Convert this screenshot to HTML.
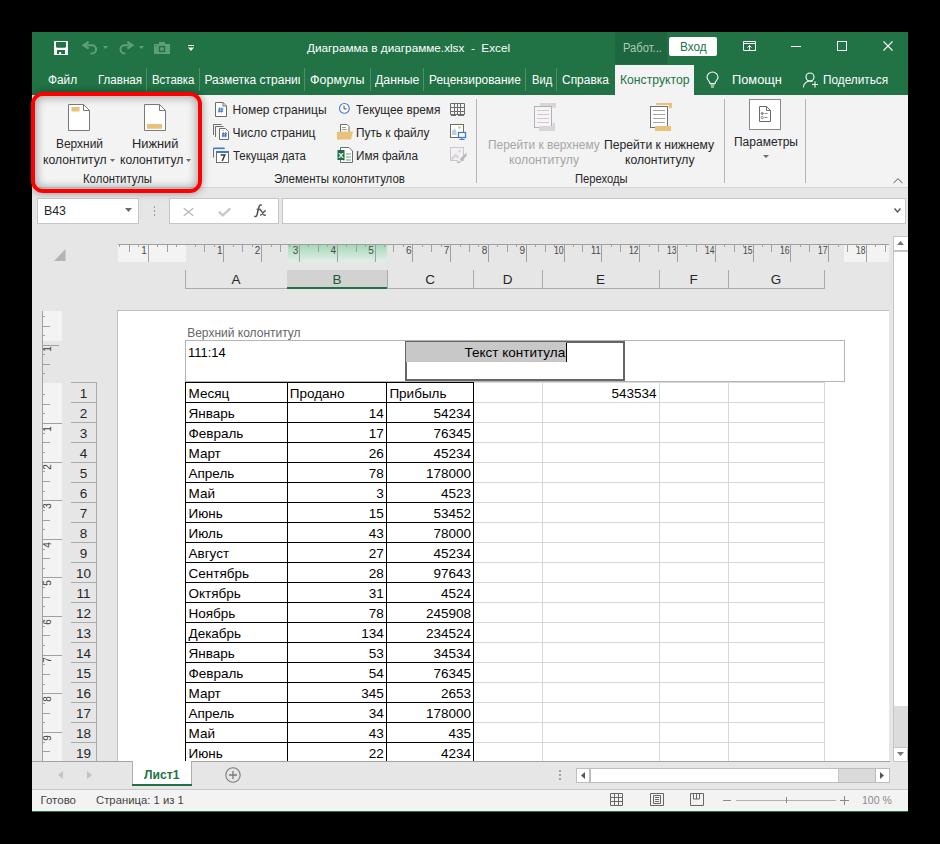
<!DOCTYPE html>
<html><head><meta charset="utf-8">
<style>
*{margin:0;padding:0;box-sizing:border-box}
html,body{width:940px;height:844px;background:#000;overflow:hidden}
body{font-family:"Liberation Sans",sans-serif;position:relative;color:#262626;font-size:12px}
.a{position:absolute;white-space:nowrap;line-height:1}
svg{position:absolute;overflow:visible}
</style></head><body>
<div class="a" style="left:32px;top:32px;width:876px;height:780px;background:#e6e6e6"></div>
<div class="a" style="left:32px;top:32px;width:876px;height:63px;background:#217346"></div>
<svg style="left:54px;top:41px" width="14" height="14" viewBox="0 0 14 14"><rect width="14" height="14" rx="0.6" fill="#fff"/><path d="M2 1h10v5l-1 0.8H3L2 6z" fill="#217346"/><rect x="3" y="9" width="8" height="4" fill="#217346"/><rect x="5.3" y="11" width="1.8" height="2" fill="#fff"/></svg>
<svg style="left:82px;top:41px" width="16" height="14" viewBox="0 0 16 14"><path d="M6.6 0.8L1.6 4.2 6.6 7.6" fill="none" stroke="#5f9e7a" stroke-width="2.2" stroke-linejoin="miter"/><path d="M2.5 4.2H10a4.1 4.1 0 0 1 0 8.2H8.6" fill="none" stroke="#5f9e7a" stroke-width="2"/></svg>
<svg style="left:103px;top:46px" width="5" height="3" viewBox="0 0 5 3"><path d="M0 0h5L2.5 3z" fill="#5f9e7a"/></svg>
<svg style="left:118px;top:41px" width="16" height="14" viewBox="0 0 16 14"><g transform="translate(16,0) scale(-1,1)"><path d="M6.6 0.8L1.6 4.2 6.6 7.6" fill="none" stroke="#5f9e7a" stroke-width="2.2"/><path d="M2.5 4.2H9.5a4.1 4.1 0 0 1 0 8.2H8.6" fill="none" stroke="#5f9e7a" stroke-width="2"/></g></svg>
<svg style="left:139px;top:46px" width="5" height="3" viewBox="0 0 5 3"><path d="M0 0h5L2.5 3z" fill="#5f9e7a"/></svg>
<svg style="left:154px;top:42px" width="16" height="12" viewBox="0 0 16 12"><path d="M0 2h5V0h6v2h5v10H0z" fill="#5f9e7a"/><path d="M4.7 3.9h6.6v6.2H4.7z" fill="#217346"/><path d="M6.2 5.4h3.6v3.2H6.2z" fill="#5f9e7a"/><rect x="1.2" y="3" width="1.2" height="1.2" fill="#217346"/></svg>
<svg style="left:188px;top:45px" width="6" height="7" viewBox="0 0 6 7"><path d="M0 0.5h6" stroke="#fff" stroke-width="1"/><path d="M0 2.5h6L3 6z" fill="#fff"/></svg>
<div class="a" style="left:307px;top:41.95px;font-size:11.75px;color:#fff;">Диаграмма в диаграмме.xlsx&nbsp; -&nbsp; Excel</div>
<div class="a" style="left:615px;top:32px;width:52px;height:32px;background:#1e6640"></div>
<div class="a" style="left:623px;top:41.74px;font-size:12px;color:#a9cbb7;transform:scaleX(0.9320);transform-origin:0 0;">Работ...</div>
<div class="a" style="left:669px;top:37px;width:48px;height:19px;background:#fff;border-radius:2px"></div>
<div class="a" style="left:680px;top:41.32px;font-size:12.5px;color:#217346;transform:scaleX(0.9422);transform-origin:0 0;">Вход</div>
<svg style="left:743px;top:41px" width="13" height="10" viewBox="0 0 13 10"><path d="M0.5 0.5h12v9h-12z M0.5 2.5h12" fill="none" stroke="#fff" stroke-width="1"/><path d="M6.5 9V4.5 M4.5 6.5l2-2 2 2" fill="none" stroke="#fff" stroke-width="1"/></svg>
<div class="a" style="left:791px;top:46px;width:10px;height:1px;background:#fff"></div>
<div class="a" style="left:837px;top:41px;width:10px;height:10px;border:1px solid #fff"></div>
<svg style="left:883px;top:41px" width="10" height="10" viewBox="0 0 10 10"><path d="M0.5 0.5l9 9 M9.5 0.5l-9 9" stroke="#fff" stroke-width="1.1"/></svg>
<div class="a" style="left:47.5px;top:73.54px;font-size:12px;color:#fff;transform:scaleX(0.9880);transform-origin:0 0;">Файл</div>
<div class="a" style="left:97.7px;top:73.54px;font-size:12px;color:#fff;transform:scaleX(0.9639);transform-origin:0 0;">Главная</div>
<div class="a" style="left:152.2px;top:73.54px;font-size:12px;color:#fff;transform:scaleX(0.9509);transform-origin:0 0;">Вставка</div>
<div class="a" style="left:204.4px;top:73.54px;font-size:12px;color:#fff;width:95.5px;overflow:hidden">Разметка страниц</div>
<div class="a" style="left:310.3px;top:73.54px;font-size:12px;color:#fff;transform:scaleX(1.0418);transform-origin:0 0;">Формулы</div>
<div class="a" style="left:374.8px;top:73.54px;font-size:12px;color:#fff;transform:scaleX(1.0237);transform-origin:0 0;">Данные</div>
<div class="a" style="left:429px;top:73.54px;font-size:12px;color:#fff;transform:scaleX(0.9902);transform-origin:0 0;">Рецензирование</div>
<div class="a" style="left:531.7px;top:73.54px;font-size:12px;color:#fff;transform:scaleX(0.9302);transform-origin:0 0;">Вид</div>
<div class="a" style="left:562.4px;top:73.54px;font-size:12px;color:#fff;transform:scaleX(0.9954);transform-origin:0 0;">Справка</div>
<div class="a" style="left:146px;top:68px;width:1px;height:23px;background:#4e8f69"></div>
<div class="a" style="left:199px;top:68px;width:1px;height:23px;background:#4e8f69"></div>
<div class="a" style="left:304px;top:68px;width:1px;height:23px;background:#4e8f69"></div>
<div class="a" style="left:370px;top:68px;width:1px;height:23px;background:#4e8f69"></div>
<div class="a" style="left:423px;top:68px;width:1px;height:23px;background:#4e8f69"></div>
<div class="a" style="left:525px;top:68px;width:1px;height:23px;background:#4e8f69"></div>
<div class="a" style="left:556px;top:68px;width:1px;height:23px;background:#4e8f69"></div>
<div class="a" style="left:615px;top:65px;width:79px;height:30px;background:#f3f3f3"></div>
<div class="a" style="left:619.6px;top:73.54px;font-size:12px;color:#217346;transform:scaleX(1.0154);transform-origin:0 0;">Конструктор</div>
<svg style="left:706px;top:72px" width="13" height="16" viewBox="0 0 13 16"><path d="M4 11.5C4 9 1 8 1 5.5a5.5 5.5 0 0 1 11 0C12 8 9 9 9 11.5z" fill="none" stroke="#fff" stroke-width="1.1"/><path d="M4.5 13h4 M5 15h3" stroke="#fff" stroke-width="1.1"/></svg>
<div class="a" style="left:732.2px;top:73.54px;font-size:12px;color:#fff;transform:scaleX(1.0686);transform-origin:0 0;">Помощн</div>
<svg style="left:803px;top:72px" width="16" height="16" viewBox="0 0 16 16"><circle cx="7" cy="5" r="4" fill="none" stroke="#fff" stroke-width="1.1"/><path d="M0.5 15.5a6.5 6.5 0 0 1 9-6" fill="none" stroke="#fff" stroke-width="1.1"/><path d="M12 9.5v6 M9 12.5h6" stroke="#fff" stroke-width="1.1"/></svg>
<div class="a" style="left:822.6px;top:73.54px;font-size:12px;color:#fff;transform:scaleX(0.9816);transform-origin:0 0;">Поделиться</div>
<div class="a" style="left:32px;top:95px;width:876px;height:92px;background:#f3f3f3"></div>
<div class="a" style="left:32px;top:187px;width:876px;height:1px;background:#d5d5d5"></div>
<svg style="left:67.5px;top:103.5px" width="22" height="27" viewBox="0 0 22 27"><path d="M0.5 0.5h15l6 6v20h-21z" fill="#fff" stroke="#7a7a7a" stroke-width="1"/><path d="M15.5 0.5v6h6" fill="none" stroke="#7a7a7a" stroke-width="1"/><rect x="3.5" y="3" width="8" height="4.5" fill="#e9c27a"/></svg>
<svg style="left:143.5px;top:103.5px" width="22" height="27" viewBox="0 0 22 27"><path d="M0.5 0.5h15l6 6v20h-21z" fill="#fff" stroke="#7a7a7a" stroke-width="1"/><path d="M15.5 0.5v6h6" fill="none" stroke="#7a7a7a" stroke-width="1"/><rect x="3" y="20" width="15" height="4.8" fill="#e9c27a"/></svg>
<div class="a" style="left:55.8px;top:137.64px;font-size:12px;color:#262626;transform:scaleX(0.9937);transform-origin:0 0;">Верхний</div>
<div class="a" style="left:42.9px;top:154.04px;font-size:12px;color:#262626;transform:scaleX(1.0139);transform-origin:0 0;">колонтитул</div>
<svg style="left:109.5px;top:159px" width="5" height="3" viewBox="0 0 5 3"><path d="M0 0h5L2.5 3z" fill="#6b6b6b"/></svg>
<div class="a" style="left:132.4px;top:137.64px;font-size:12px;color:#262626;transform:scaleX(1.0690);transform-origin:0 0;">Нижний</div>
<div class="a" style="left:119.9px;top:154.04px;font-size:12px;color:#262626;transform:scaleX(1.0074);transform-origin:0 0;">колонтитул</div>
<svg style="left:186px;top:159px" width="5" height="3" viewBox="0 0 5 3"><path d="M0 0h5L2.5 3z" fill="#6b6b6b"/></svg>
<div class="a" style="left:82.6px;top:173.04px;font-size:12px;color:#262626;transform:scaleX(0.9435);transform-origin:0 0;">Колонтитулы</div>
<div class="a" style="left:232.6px;top:104.04px;font-size:12px;color:#262626;">Номер страницы</div>
<div class="a" style="left:232.6px;top:126.84px;font-size:12px;color:#262626;">Число страниц</div>
<div class="a" style="left:232.6px;top:149.84px;font-size:12px;color:#262626;transform:scaleX(0.9526);transform-origin:0 0;">Текущая дата</div>
<svg style="left:214.5px;top:101.5px" width="12" height="15" viewBox="0 0 12 15"><path d="M0.5 0.5h7.5l3.5 3.5v10.5h-11z" fill="#fff" stroke="#6d6d6d"/><path d="M8 0.5v3.5h3.5" fill="none" stroke="#6d6d6d"/><path d="M4.6 5.5l-0.6 5 M7.1 5.5l-0.6 5 M3.3 7h5.2 M3 9.1h5.2" stroke="#3e7bc4" stroke-width="1.15"/></svg>
<svg style="left:212.5px;top:124px" width="17" height="16" viewBox="0 0 17 16"><path d="M0.5 11V0.5h8 M2.5 13V2.5h8" fill="none" stroke="#6d6d6d"/><path d="M6.5 4.5h6l3 3v8h-9z" fill="#fff" stroke="#6d6d6d"/><path d="M10.4 8.3l-0.5 5 M12.8 8.3l-0.5 5 M9 9.8h5 M8.8 11.9h5" stroke="#3e7bc4" stroke-width="1.15"/><path d="M9 6.5h2" stroke="#bbb" stroke-width="0.8"/></svg>
<svg style="left:212.5px;top:147px" width="16" height="16" viewBox="0 0 16 16"><path d="M0.5 10.5V1.5h11" fill="none" stroke="#6d6d6d"/><rect x="0.5" y="0.5" width="11" height="1.6" fill="#3e7bc4"/><rect x="3.5" y="4.5" width="12" height="11" fill="#fff" stroke="#6d6d6d"/><rect x="3.5" y="4" width="12" height="2" fill="#3e7bc4"/><path d="M7.6 8h4.2l-2.6 6" fill="none" stroke="#3a3a3a" stroke-width="1.5"/></svg>
<div class="a" style="left:356.4px;top:104.04px;font-size:12px;color:#262626;transform:scaleX(0.9853);transform-origin:0 0;">Текущее время</div>
<div class="a" style="left:356.4px;top:126.84px;font-size:12px;color:#262626;transform:scaleX(0.9839);transform-origin:0 0;">Путь к файлу</div>
<div class="a" style="left:356.4px;top:149.84px;font-size:12px;color:#262626;transform:scaleX(0.9733);transform-origin:0 0;">Имя файла</div>
<svg style="left:339px;top:103px" width="11" height="11" viewBox="0 0 11 11"><circle cx="5.4" cy="5.4" r="4.85" fill="#fff" stroke="#3e7bc4" stroke-width="1.1"/><path d="M5 2.6v3.3h2.5" fill="none" stroke="#444" stroke-width="1"/></svg>
<svg style="left:336.5px;top:124px" width="17" height="16" viewBox="0 0 17 16"><path d="M3.5 8V0.5h6.5l2 2V8" fill="#fff" stroke="#6d6d6d"/><path d="M5 3.5h4 M5 5.5h5" stroke="#9a9a9a"/><path d="M1 7.5h15l-2 8H0z" fill="#e9c27a"/><path d="M0 8h3v7.5H0z" fill="#e9c27a"/></svg>
<svg style="left:336.5px;top:147px" width="17" height="16" viewBox="0 0 17 16"><path d="M3.5 0.5h8.5l3.5 3.5v11.5h-12z" fill="#fff" stroke="#6d6d6d"/><path d="M9 7h5 M9 10h5 M9 13h5 M6 7h1.5 M6 10h1.5 M6 13h1.5" stroke="#5aa36f" stroke-width="1.2"/><rect x="0.5" y="3" width="7" height="10" fill="#1d7044"/><text x="4" y="11" font-size="8" font-weight="bold" fill="#fff" text-anchor="middle" font-family="Liberation Sans">X</text></svg>
<svg style="left:450px;top:103px" width="15" height="13" viewBox="0 0 15 13"><path d="M0.5 0.5h14v11h-14z M0.5 4.5h14 M0.5 8.5h14 M4.5 0.5v11 M7.5 0.5v11 M10.5 0.5v11" fill="none" stroke="#6d6d6d" stroke-width="1"/><path d="M1 12.5h5 M8 12.5h6" stroke="#6d6d6d" stroke-width="1"/></svg>
<svg style="left:450px;top:124px" width="17" height="16" viewBox="0 0 17 16"><rect x="0.5" y="0.5" width="13" height="13" fill="#fff" stroke="#6d6d6d"/><circle cx="9.5" cy="3.5" r="1.3" fill="#e9c27a"/><path d="M2 11V7l2.5-2.5L6.5 7v4z" fill="#b9cfe5"/><rect x="8.5" y="8.5" width="7" height="5" fill="#fff" stroke="#3e7bc4" stroke-width="1.3"/><path d="M12 14v1 M9.5 15.5h5" stroke="#3e7bc4" stroke-width="1.1"/></svg>
<svg style="left:450px;top:147px" width="17" height="16" viewBox="0 0 17 16"><rect x="0.5" y="0.5" width="13" height="13" fill="#f4f0f4" stroke="#c8c8c8"/><path d="M1.5 12.5l4-4.5 3 3" fill="none" stroke="#d6d2d6" stroke-width="2.2"/><circle cx="9.5" cy="4" r="1.5" fill="#dcd8dc"/><path d="M16.5 5.5L10 12l-1.5 1.5-2 2.5h3l2-2L16.5 9z" fill="#b8b8b8"/><circle cx="9.3" cy="13.2" r="1.3" fill="#f4f0f4"/></svg>
<div class="a" style="left:273.9px;top:172.74px;font-size:12px;color:#262626;transform:scaleX(0.9564);transform-origin:0 0;">Элементы колонтитулов</div>
<div class="a" style="left:476px;top:99px;width:1px;height:84px;background:#b4b4b4"></div>
<svg style="left:533px;top:102px" width="24" height="29" viewBox="0 0 24 29"><rect x="7" y="1" width="16" height="4.7" fill="#d9d5d9"/><rect x="1.5" y="4.5" width="17" height="21" fill="#f7f3f7" stroke="#b3b1b3"/><path d="M4 8.5h12 M4 12.5h12 M4 16.5h12 M4 20.5h12" stroke="#cfcccf"/><rect x="6" y="24" width="16" height="5" fill="#d9d5d9"/><rect x="19.5" y="21" width="2.5" height="4" fill="#d9d5d9"/></svg>
<svg style="left:649px;top:102px" width="24" height="29" viewBox="0 0 24 29"><rect x="7" y="1" width="16" height="2" fill="#e9c27a"/><rect x="20" y="1" width="3" height="5" fill="#e9c27a"/><rect x="1.5" y="4.5" width="17" height="21" fill="#fff" stroke="#707070"/><path d="M4 8.5h12 M4 12.5h12 M4 16.5h12 M4 20.5h12" stroke="#a5a5a5"/><rect x="6" y="24" width="16" height="5" fill="#e9c27a"/></svg>
<div class="a" style="left:487.7px;top:138.94px;font-size:12px;color:#a6a6a6;transform:scaleX(0.9924);transform-origin:0 0;">Перейти к верхнему</div>
<div class="a" style="left:508.5px;top:154.04px;font-size:12px;color:#a6a6a6;transform:scaleX(1.0186);transform-origin:0 0;">колонтитулу</div>
<div class="a" style="left:604.4px;top:138.94px;font-size:12px;color:#262626;transform:scaleX(1.0144);transform-origin:0 0;">Перейти к нижнему</div>
<div class="a" style="left:624.7px;top:154.04px;font-size:12px;color:#262626;transform:scaleX(1.0097);transform-origin:0 0;">колонтитулу</div>
<div class="a" style="left:574.6px;top:172.64px;font-size:12px;color:#262626;transform:scaleX(0.9327);transform-origin:0 0;">Переходы</div>
<div class="a" style="left:724px;top:99px;width:1px;height:84px;background:#b4b4b4"></div>
<div class="a" style="left:749px;top:99px;width:32px;height:31px;background:#fff;border:1px solid #8a8a8a"></div>
<svg style="left:759px;top:106px" width="12" height="16" viewBox="0 0 12 16"><path d="M0.5 0.5h7l4 4v11h-11z M7.5 0.5v4h4" fill="#fff" stroke="#6a6a6a" stroke-width="1"/><circle cx="3.3" cy="7.5" r="1.1" fill="#8a8a8a" stroke="#6a6a6a" stroke-width="0.6"/><circle cx="3.3" cy="11.5" r="1.1" fill="#fff" stroke="#6a6a6a" stroke-width="0.8"/><path d="M5.5 7.5h3 M5.5 11.5h3" stroke="#8a8a8a"/></svg>
<div class="a" style="left:733.5px;top:136.34px;font-size:12px;color:#262626;transform:scaleX(0.9999);transform-origin:0 0;">Параметры</div>
<svg style="left:762.5px;top:155px" width="6" height="3" viewBox="0 0 6 3"><path d="M0 0h6L3 3z" fill="#6b6b6b"/></svg>
<div class="a" style="left:805px;top:99px;width:1px;height:84px;background:#b4b4b4"></div>
<svg style="left:892.5px;top:178px" width="10" height="5" viewBox="0 0 10 5"><path d="M0.5 5L5 0.7 9.5 5" fill="none" stroke="#555" stroke-width="1"/></svg>
<div class="a" style="left:31px;top:92.2px;width:171.4px;height:101.3px;border:4.6px solid #ff0000;border-radius:12px;box-shadow:inset 0 0 8px 2px rgba(0,0,0,0.3), 0 0 7px 1px rgba(0,0,0,0.3)"></div>
<div class="a" style="left:37px;top:198px;width:102px;height:26px;background:#fff;border:1px solid #c6c6c6"></div>
<div class="a" style="left:44.2px;top:205.22px;font-size:12.5px;color:#262626;transform:scaleX(0.9886);transform-origin:0 0;">B43</div>
<svg style="left:125px;top:208px" width="7" height="4" viewBox="0 0 7 4"><path d="M0 0h7L3.5 4z" fill="#6b6b6b"/></svg>
<div class="a" style="left:153.5px;top:206px;width:1.5px;height:1.5px;background:#9a9a9a"></div>
<div class="a" style="left:153.5px;top:210px;width:1.5px;height:1.5px;background:#9a9a9a"></div>
<div class="a" style="left:153.5px;top:214px;width:1.5px;height:1.5px;background:#9a9a9a"></div>
<div class="a" style="left:169px;top:198px;width:110px;height:26px;background:#fff;border:1px solid #c6c6c6"></div>
<svg style="left:182.5px;top:208px" width="11" height="8" viewBox="0 0 11 8"><path d="M0.8 0.3l9.4 7.4 M10.2 0.3L0.8 7.7" stroke="#b5b5b5" stroke-width="1.2"/></svg>
<svg style="left:218px;top:208px" width="13" height="8" viewBox="0 0 13 8"><path d="M0.8 3.6l3.9 3.8L12.3 0.4" fill="none" stroke="#c8c8c8" stroke-width="2.2"/></svg>
<svg style="left:253px;top:204px" width="14" height="14" viewBox="0 0 14 14"><path d="M8.8 1.2Q6.8 0.3 6 2.8L4 10.8Q3.4 13 1.2 12.4" fill="none" stroke="#555" stroke-width="1.5"/><path d="M3.6 5.3h4.3" stroke="#555" stroke-width="1.2"/><path d="M6.8 6.4Q8 5.9 9 7.8L10.4 10.3Q11.3 11.9 12.9 11 M12.6 6.3L7.3 11.5" fill="none" stroke="#555" stroke-width="1.4"/></svg>
<div class="a" style="left:282px;top:198px;width:624px;height:26px;background:#fff;border:1px solid #c6c6c6"></div>
<svg style="left:894px;top:208px" width="7" height="5" viewBox="0 0 7 5"><path d="M0.5 0.5L3.5 4 6.5 0.5" fill="none" stroke="#555" stroke-width="1.4"/></svg>
<svg style="left:53.5px;top:249px" width="11.5" height="12" viewBox="0 0 11.5 12"><path d="M11.5 0v12H0z" fill="#b4b4b4"/></svg>
<div class="a" style="left:118px;top:244px;width:771px;height:1px;background:#a0a0a0"></div>
<div class="a" style="left:118px;top:245px;width:68px;height:17px;background:#f3f3f3"></div>
<div class="a" style="left:844px;top:245px;width:45px;height:17px;background:#f3f3f3"></div>
<div class="a" style="left:288px;top:245px;width:99px;height:17px;background:linear-gradient(#a6d9b8,#e3efe7)"></div>
<div class="a" style="left:119.4px;top:245px;width:1px;height:2px;background:#a0a0a0"></div>
<div class="a" style="left:128.8px;top:245px;width:1px;height:7px;background:#a0a0a0"></div>
<div class="a" style="left:138.3px;top:245px;width:1px;height:2px;background:#a0a0a0"></div>
<div class="a" style="left:147.7px;top:245px;width:1px;height:17px;background:#a0a0a0"></div>
<div class="a" style="left:157.2px;top:245px;width:1px;height:2px;background:#a0a0a0"></div>
<div class="a" style="left:166.6px;top:245px;width:1px;height:7px;background:#a0a0a0"></div>
<div class="a" style="left:176.1px;top:245px;width:1px;height:2px;background:#a0a0a0"></div>
<div class="a" style="left:194.9px;top:245px;width:1px;height:2px;background:#a0a0a0"></div>
<div class="a" style="left:204.4px;top:245px;width:1px;height:7px;background:#a0a0a0"></div>
<div class="a" style="left:213.8px;top:245px;width:1px;height:2px;background:#a0a0a0"></div>
<div class="a" style="left:223.3px;top:245px;width:1px;height:17px;background:#a0a0a0"></div>
<div class="a" style="left:232.7px;top:245px;width:1px;height:2px;background:#a0a0a0"></div>
<div class="a" style="left:242.2px;top:245px;width:1px;height:7px;background:#a0a0a0"></div>
<div class="a" style="left:251.6px;top:245px;width:1px;height:2px;background:#a0a0a0"></div>
<div class="a" style="left:261.1px;top:245px;width:1px;height:17px;background:#a0a0a0"></div>
<div class="a" style="left:270.6px;top:245px;width:1px;height:2px;background:#a0a0a0"></div>
<div class="a" style="left:280.0px;top:245px;width:1px;height:7px;background:#a0a0a0"></div>
<div class="a" style="left:289.4px;top:245px;width:1px;height:2px;background:#a0a0a0"></div>
<div class="a" style="left:298.9px;top:245px;width:1px;height:17px;background:#a0a0a0"></div>
<div class="a" style="left:308.4px;top:245px;width:1px;height:2px;background:#a0a0a0"></div>
<div class="a" style="left:317.8px;top:245px;width:1px;height:7px;background:#a0a0a0"></div>
<div class="a" style="left:327.3px;top:245px;width:1px;height:2px;background:#a0a0a0"></div>
<div class="a" style="left:336.7px;top:245px;width:1px;height:17px;background:#a0a0a0"></div>
<div class="a" style="left:346.1px;top:245px;width:1px;height:2px;background:#a0a0a0"></div>
<div class="a" style="left:355.6px;top:245px;width:1px;height:7px;background:#a0a0a0"></div>
<div class="a" style="left:365.0px;top:245px;width:1px;height:2px;background:#a0a0a0"></div>
<div class="a" style="left:374.5px;top:245px;width:1px;height:17px;background:#a0a0a0"></div>
<div class="a" style="left:383.9px;top:245px;width:1px;height:2px;background:#a0a0a0"></div>
<div class="a" style="left:393.4px;top:245px;width:1px;height:7px;background:#a0a0a0"></div>
<div class="a" style="left:402.9px;top:245px;width:1px;height:2px;background:#a0a0a0"></div>
<div class="a" style="left:412.3px;top:245px;width:1px;height:17px;background:#a0a0a0"></div>
<div class="a" style="left:421.7px;top:245px;width:1px;height:2px;background:#a0a0a0"></div>
<div class="a" style="left:431.2px;top:245px;width:1px;height:7px;background:#a0a0a0"></div>
<div class="a" style="left:440.6px;top:245px;width:1px;height:2px;background:#a0a0a0"></div>
<div class="a" style="left:450.1px;top:245px;width:1px;height:17px;background:#a0a0a0"></div>
<div class="a" style="left:459.5px;top:245px;width:1px;height:2px;background:#a0a0a0"></div>
<div class="a" style="left:469.0px;top:245px;width:1px;height:7px;background:#a0a0a0"></div>
<div class="a" style="left:478.4px;top:245px;width:1px;height:2px;background:#a0a0a0"></div>
<div class="a" style="left:487.9px;top:245px;width:1px;height:17px;background:#a0a0a0"></div>
<div class="a" style="left:497.3px;top:245px;width:1px;height:2px;background:#a0a0a0"></div>
<div class="a" style="left:506.8px;top:245px;width:1px;height:7px;background:#a0a0a0"></div>
<div class="a" style="left:516.3px;top:245px;width:1px;height:2px;background:#a0a0a0"></div>
<div class="a" style="left:525.7px;top:245px;width:1px;height:17px;background:#a0a0a0"></div>
<div class="a" style="left:535.1px;top:245px;width:1px;height:2px;background:#a0a0a0"></div>
<div class="a" style="left:544.6px;top:245px;width:1px;height:7px;background:#a0a0a0"></div>
<div class="a" style="left:554.0px;top:245px;width:1px;height:2px;background:#a0a0a0"></div>
<div class="a" style="left:563.5px;top:245px;width:1px;height:17px;background:#a0a0a0"></div>
<div class="a" style="left:573.0px;top:245px;width:1px;height:2px;background:#a0a0a0"></div>
<div class="a" style="left:582.4px;top:245px;width:1px;height:7px;background:#a0a0a0"></div>
<div class="a" style="left:591.8px;top:245px;width:1px;height:2px;background:#a0a0a0"></div>
<div class="a" style="left:601.3px;top:245px;width:1px;height:17px;background:#a0a0a0"></div>
<div class="a" style="left:610.7px;top:245px;width:1px;height:2px;background:#a0a0a0"></div>
<div class="a" style="left:620.2px;top:245px;width:1px;height:7px;background:#a0a0a0"></div>
<div class="a" style="left:629.6px;top:245px;width:1px;height:2px;background:#a0a0a0"></div>
<div class="a" style="left:639.1px;top:245px;width:1px;height:17px;background:#a0a0a0"></div>
<div class="a" style="left:648.5px;top:245px;width:1px;height:2px;background:#a0a0a0"></div>
<div class="a" style="left:658.0px;top:245px;width:1px;height:7px;background:#a0a0a0"></div>
<div class="a" style="left:667.5px;top:245px;width:1px;height:2px;background:#a0a0a0"></div>
<div class="a" style="left:676.9px;top:245px;width:1px;height:17px;background:#a0a0a0"></div>
<div class="a" style="left:686.3px;top:245px;width:1px;height:2px;background:#a0a0a0"></div>
<div class="a" style="left:695.8px;top:245px;width:1px;height:7px;background:#a0a0a0"></div>
<div class="a" style="left:705.3px;top:245px;width:1px;height:2px;background:#a0a0a0"></div>
<div class="a" style="left:714.7px;top:245px;width:1px;height:17px;background:#a0a0a0"></div>
<div class="a" style="left:724.1px;top:245px;width:1px;height:2px;background:#a0a0a0"></div>
<div class="a" style="left:733.6px;top:245px;width:1px;height:7px;background:#a0a0a0"></div>
<div class="a" style="left:743.0px;top:245px;width:1px;height:2px;background:#a0a0a0"></div>
<div class="a" style="left:752.5px;top:245px;width:1px;height:17px;background:#a0a0a0"></div>
<div class="a" style="left:761.9px;top:245px;width:1px;height:2px;background:#a0a0a0"></div>
<div class="a" style="left:771.4px;top:245px;width:1px;height:7px;background:#a0a0a0"></div>
<div class="a" style="left:780.8px;top:245px;width:1px;height:2px;background:#a0a0a0"></div>
<div class="a" style="left:790.3px;top:245px;width:1px;height:17px;background:#a0a0a0"></div>
<div class="a" style="left:799.7px;top:245px;width:1px;height:2px;background:#a0a0a0"></div>
<div class="a" style="left:809.2px;top:245px;width:1px;height:7px;background:#a0a0a0"></div>
<div class="a" style="left:818.6px;top:245px;width:1px;height:2px;background:#a0a0a0"></div>
<div class="a" style="left:828.1px;top:245px;width:1px;height:17px;background:#a0a0a0"></div>
<div class="a" style="left:837.5px;top:245px;width:1px;height:2px;background:#a0a0a0"></div>
<div class="a" style="left:847.0px;top:245px;width:1px;height:7px;background:#a0a0a0"></div>
<div class="a" style="left:856.4px;top:245px;width:1px;height:2px;background:#a0a0a0"></div>
<div class="a" style="left:865.9px;top:245px;width:1px;height:17px;background:#a0a0a0"></div>
<div class="a" style="left:875.3px;top:245px;width:1px;height:2px;background:#a0a0a0"></div>
<div class="a" style="left:884.8px;top:245px;width:1px;height:7px;background:#a0a0a0"></div>
<div class="a" style="left:-77.39999999999998px;width:300px;text-align:right;top:245.73px;font-size:10px;color:#4a4a4a;">1</div>
<div class="a" style="left:-39.599999999999966px;width:300px;text-align:right;top:245.73px;font-size:10px;color:#4a4a4a;">2</div>
<div class="a" style="left:-1.8000000000000114px;width:300px;text-align:right;top:245.73px;font-size:10px;color:#4a4a4a;">3</div>
<div class="a" style="left:36.0px;width:300px;text-align:right;top:245.73px;font-size:10px;color:#4a4a4a;">4</div>
<div class="a" style="left:73.80000000000001px;width:300px;text-align:right;top:245.73px;font-size:10px;color:#4a4a4a;">5</div>
<div class="a" style="left:111.59999999999997px;width:300px;text-align:right;top:245.73px;font-size:10px;color:#4a4a4a;">6</div>
<div class="a" style="left:149.39999999999998px;width:300px;text-align:right;top:245.73px;font-size:10px;color:#4a4a4a;">7</div>
<div class="a" style="left:187.2px;width:300px;text-align:right;top:245.73px;font-size:10px;color:#4a4a4a;">8</div>
<div class="a" style="left:225.0px;width:300px;text-align:right;top:245.73px;font-size:10px;color:#4a4a4a;">9</div>
<div class="a" style="left:553.6px;top:245.73px;font-size:10px;color:#4a4a4a;transform:scaleX(0.8621);transform-origin:0 0;">10</div>
<div class="a" style="left:591.4px;top:245.73px;font-size:10px;color:#4a4a4a;transform:scaleX(0.9289);transform-origin:0 0;">11</div>
<div class="a" style="left:629.1999999999999px;top:245.73px;font-size:10px;color:#4a4a4a;transform:scaleX(0.8621);transform-origin:0 0;">12</div>
<div class="a" style="left:667.0px;top:245.73px;font-size:10px;color:#4a4a4a;transform:scaleX(0.8621);transform-origin:0 0;">13</div>
<div class="a" style="left:704.8px;top:245.73px;font-size:10px;color:#4a4a4a;transform:scaleX(0.8621);transform-origin:0 0;">14</div>
<div class="a" style="left:742.6px;top:245.73px;font-size:10px;color:#4a4a4a;transform:scaleX(0.8621);transform-origin:0 0;">15</div>
<div class="a" style="left:780.4px;top:245.73px;font-size:10px;color:#4a4a4a;transform:scaleX(0.8621);transform-origin:0 0;">16</div>
<div class="a" style="left:818.1999999999999px;top:245.73px;font-size:10px;color:#4a4a4a;transform:scaleX(0.8621);transform-origin:0 0;">17</div>
<div class="a" style="left:856.0px;top:245.73px;font-size:10px;color:#4a4a4a;transform:scaleX(0.8621);transform-origin:0 0;">18</div>
<div class="a" style="left:-153.3px;width:300px;text-align:right;top:245.73px;font-size:10px;color:#4a4a4a;">1</div>
<div class="a" style="left:185px;top:288px;width:640px;height:1px;background:#ababab"></div>
<div class="a" style="left:185px;top:270px;width:1px;height:19px;background:#ababab"></div>
<div class="a" style="left:86.0px;width:300px;text-align:center;top:272.57px;font-size:13.5px;color:#262626;">A</div>
<div class="a" style="left:287px;top:270px;width:1px;height:19px;background:#ababab"></div>
<div class="a" style="left:287px;top:270px;width:100px;height:19px;background:#d2d2d2"></div>
<div class="a" style="left:287px;top:287px;width:100px;height:2px;background:#217346"></div>
<div class="a" style="left:187.0px;width:300px;text-align:center;top:272.57px;font-size:13.5px;color:#1d5a37;">B</div>
<div class="a" style="left:387px;top:270px;width:1px;height:19px;background:#ababab"></div>
<div class="a" style="left:280.0px;width:300px;text-align:center;top:272.57px;font-size:13.5px;color:#262626;">C</div>
<div class="a" style="left:473px;top:270px;width:1px;height:19px;background:#ababab"></div>
<div class="a" style="left:357.5px;width:300px;text-align:center;top:272.57px;font-size:13.5px;color:#262626;">D</div>
<div class="a" style="left:542px;top:270px;width:1px;height:19px;background:#ababab"></div>
<div class="a" style="left:450.5px;width:300px;text-align:center;top:272.57px;font-size:13.5px;color:#262626;">E</div>
<div class="a" style="left:659px;top:270px;width:1px;height:19px;background:#ababab"></div>
<div class="a" style="left:543.5px;width:300px;text-align:center;top:272.57px;font-size:13.5px;color:#262626;">F</div>
<div class="a" style="left:728px;top:270px;width:1px;height:19px;background:#ababab"></div>
<div class="a" style="left:626.0px;width:300px;text-align:center;top:272.57px;font-size:13.5px;color:#262626;">G</div>
<div class="a" style="left:824px;top:270px;width:1px;height:19px;background:#ababab"></div>
<div class="a" style="left:42px;top:311px;width:1px;height:450px;background:#a0a0a0"></div>
<div class="a" style="left:43px;top:311px;width:19px;height:30px;background:#f3f3f3"></div>
<div class="a" style="left:43px;top:383px;width:19px;height:378px;background:#f3f3f3"></div>
<div class="a" style="left:43px;top:373.1px;width:1.5px;height:1px;background:#a0a0a0"></div>
<div class="a" style="left:43px;top:363.6px;width:7px;height:1px;background:#a0a0a0"></div>
<div class="a" style="left:43px;top:354.1px;width:1.5px;height:1px;background:#a0a0a0"></div>
<div class="a" style="left:43px;top:344.7px;width:16px;height:1px;background:#a0a0a0"></div>
<div class="a" style="left:43px;top:335.3px;width:1.5px;height:1px;background:#a0a0a0"></div>
<div class="a" style="left:43px;top:325.8px;width:7px;height:1px;background:#a0a0a0"></div>
<div class="a" style="left:43px;top:316.4px;width:1.5px;height:1px;background:#a0a0a0"></div>
<div class="a" style="left:43px;top:394.0px;width:1.5px;height:1px;background:#a0a0a0"></div>
<div class="a" style="left:43px;top:403.7px;width:7px;height:1px;background:#a0a0a0"></div>
<div class="a" style="left:43px;top:413.3px;width:1.5px;height:1px;background:#a0a0a0"></div>
<div class="a" style="left:43px;top:423.0px;width:19px;height:1px;background:#a0a0a0"></div>
<div class="a" style="left:43px;top:432.6px;width:1.5px;height:1px;background:#a0a0a0"></div>
<div class="a" style="left:43px;top:442.3px;width:7px;height:1px;background:#a0a0a0"></div>
<div class="a" style="left:43px;top:451.9px;width:1.5px;height:1px;background:#a0a0a0"></div>
<div class="a" style="left:43px;top:461.6px;width:19px;height:1px;background:#a0a0a0"></div>
<div class="a" style="left:43px;top:471.3px;width:1.5px;height:1px;background:#a0a0a0"></div>
<div class="a" style="left:43px;top:480.9px;width:7px;height:1px;background:#a0a0a0"></div>
<div class="a" style="left:43px;top:490.5px;width:1.5px;height:1px;background:#a0a0a0"></div>
<div class="a" style="left:43px;top:500.2px;width:19px;height:1px;background:#a0a0a0"></div>
<div class="a" style="left:43px;top:509.8px;width:1.5px;height:1px;background:#a0a0a0"></div>
<div class="a" style="left:43px;top:519.5px;width:7px;height:1px;background:#a0a0a0"></div>
<div class="a" style="left:43px;top:529.1px;width:1.5px;height:1px;background:#a0a0a0"></div>
<div class="a" style="left:43px;top:538.8px;width:19px;height:1px;background:#a0a0a0"></div>
<div class="a" style="left:43px;top:548.5px;width:1.5px;height:1px;background:#a0a0a0"></div>
<div class="a" style="left:43px;top:558.1px;width:7px;height:1px;background:#a0a0a0"></div>
<div class="a" style="left:43px;top:567.7px;width:1.5px;height:1px;background:#a0a0a0"></div>
<div class="a" style="left:43px;top:577.4px;width:19px;height:1px;background:#a0a0a0"></div>
<div class="a" style="left:43px;top:587.0px;width:1.5px;height:1px;background:#a0a0a0"></div>
<div class="a" style="left:43px;top:596.7px;width:7px;height:1px;background:#a0a0a0"></div>
<div class="a" style="left:43px;top:606.4px;width:1.5px;height:1px;background:#a0a0a0"></div>
<div class="a" style="left:43px;top:616.0px;width:19px;height:1px;background:#a0a0a0"></div>
<div class="a" style="left:43px;top:625.6px;width:1.5px;height:1px;background:#a0a0a0"></div>
<div class="a" style="left:43px;top:635.3px;width:7px;height:1px;background:#a0a0a0"></div>
<div class="a" style="left:43px;top:645.0px;width:1.5px;height:1px;background:#a0a0a0"></div>
<div class="a" style="left:43px;top:654.6px;width:19px;height:1px;background:#a0a0a0"></div>
<div class="a" style="left:43px;top:664.3px;width:1.5px;height:1px;background:#a0a0a0"></div>
<div class="a" style="left:43px;top:673.9px;width:7px;height:1px;background:#a0a0a0"></div>
<div class="a" style="left:43px;top:683.5px;width:1.5px;height:1px;background:#a0a0a0"></div>
<div class="a" style="left:43px;top:693.2px;width:19px;height:1px;background:#a0a0a0"></div>
<div class="a" style="left:43px;top:702.8px;width:1.5px;height:1px;background:#a0a0a0"></div>
<div class="a" style="left:43px;top:712.5px;width:7px;height:1px;background:#a0a0a0"></div>
<div class="a" style="left:43px;top:722.1px;width:1.5px;height:1px;background:#a0a0a0"></div>
<div class="a" style="left:43px;top:731.8px;width:19px;height:1px;background:#a0a0a0"></div>
<div class="a" style="left:43px;top:741.5px;width:1.5px;height:1px;background:#a0a0a0"></div>
<div class="a" style="left:43px;top:751.1px;width:7px;height:1px;background:#a0a0a0"></div>
<div class="a" style="left:43.5px;top:424.8px;width:8px;height:8px;line-height:8px;font-size:10px;color:#404040;transform:rotate(-90deg);text-align:center">1</div>
<div class="a" style="left:43.5px;top:463.4px;width:8px;height:8px;line-height:8px;font-size:10px;color:#404040;transform:rotate(-90deg);text-align:center">2</div>
<div class="a" style="left:43.5px;top:502.0px;width:8px;height:8px;line-height:8px;font-size:10px;color:#404040;transform:rotate(-90deg);text-align:center">3</div>
<div class="a" style="left:43.5px;top:540.5999999999999px;width:8px;height:8px;line-height:8px;font-size:10px;color:#404040;transform:rotate(-90deg);text-align:center">4</div>
<div class="a" style="left:43.5px;top:579.1999999999999px;width:8px;height:8px;line-height:8px;font-size:10px;color:#404040;transform:rotate(-90deg);text-align:center">5</div>
<div class="a" style="left:43.5px;top:617.8px;width:8px;height:8px;line-height:8px;font-size:10px;color:#404040;transform:rotate(-90deg);text-align:center">6</div>
<div class="a" style="left:43.5px;top:656.3999999999999px;width:8px;height:8px;line-height:8px;font-size:10px;color:#404040;transform:rotate(-90deg);text-align:center">7</div>
<div class="a" style="left:43.5px;top:695.0px;width:8px;height:8px;line-height:8px;font-size:10px;color:#404040;transform:rotate(-90deg);text-align:center">8</div>
<div class="a" style="left:43.5px;top:733.5999999999999px;width:8px;height:8px;line-height:8px;font-size:10px;color:#404040;transform:rotate(-90deg);text-align:center">9</div>
<div class="a" style="left:43.5px;top:345.2px;width:8px;height:8px;line-height:8px;font-size:10px;color:#404040;transform:rotate(-90deg);text-align:center">1</div>
<div class="a" style="left:117px;top:310px;width:772px;height:451px;background:#fff;border-left:1px solid #c0c0c0;border-top:1px solid #c0c0c0"></div>
<div class="a" style="left:187.2px;top:327.04px;font-size:12px;color:#666;">Верхний колонтитул</div>
<div class="a" style="left:185px;top:340px;width:660px;height:42px;border:1px solid #b4b4b4"></div>
<div class="a" style="left:405px;top:341px;width:220px;height:40px;border:2px solid #666;background:#fff"></div>
<div class="a" style="left:406px;top:342px;width:160px;height:20px;background:#c8c8c8"></div>
<div class="a" style="left:187.5px;top:345.77px;font-size:13.5px;color:#000;transform:scaleX(0.9579);transform-origin:0 0;">111:14</div>
<div class="a" style="left:464.5px;top:345.97px;font-size:13.5px;color:#000;">Текст контитула</div>
<div class="a" style="left:565.5px;top:342.5px;width:1px;height:19.5px;background:#000"></div>
<div class="a" style="left:71px;top:382px;width:26px;height:1px;background:#ababab"></div>
<div class="a" style="left:-66.5px;width:300px;text-align:center;top:386.57px;font-size:13.5px;color:#262626;">1</div>
<div class="a" style="left:71px;top:402px;width:26px;height:1px;background:#ababab"></div>
<div class="a" style="left:-66.5px;width:300px;text-align:center;top:406.57px;font-size:13.5px;color:#262626;">2</div>
<div class="a" style="left:71px;top:422px;width:26px;height:1px;background:#ababab"></div>
<div class="a" style="left:-66.5px;width:300px;text-align:center;top:426.57px;font-size:13.5px;color:#262626;">3</div>
<div class="a" style="left:71px;top:442px;width:26px;height:1px;background:#ababab"></div>
<div class="a" style="left:-66.5px;width:300px;text-align:center;top:446.57px;font-size:13.5px;color:#262626;">4</div>
<div class="a" style="left:71px;top:462px;width:26px;height:1px;background:#ababab"></div>
<div class="a" style="left:-66.5px;width:300px;text-align:center;top:466.57px;font-size:13.5px;color:#262626;">5</div>
<div class="a" style="left:71px;top:482px;width:26px;height:1px;background:#ababab"></div>
<div class="a" style="left:-66.5px;width:300px;text-align:center;top:486.57px;font-size:13.5px;color:#262626;">6</div>
<div class="a" style="left:71px;top:502px;width:26px;height:1px;background:#ababab"></div>
<div class="a" style="left:-66.5px;width:300px;text-align:center;top:506.57px;font-size:13.5px;color:#262626;">7</div>
<div class="a" style="left:71px;top:522px;width:26px;height:1px;background:#ababab"></div>
<div class="a" style="left:-66.5px;width:300px;text-align:center;top:526.57px;font-size:13.5px;color:#262626;">8</div>
<div class="a" style="left:71px;top:542px;width:26px;height:1px;background:#ababab"></div>
<div class="a" style="left:-66.5px;width:300px;text-align:center;top:546.57px;font-size:13.5px;color:#262626;">9</div>
<div class="a" style="left:71px;top:562px;width:26px;height:1px;background:#ababab"></div>
<div class="a" style="left:-66.5px;width:300px;text-align:center;top:566.57px;font-size:13.5px;color:#262626;">10</div>
<div class="a" style="left:71px;top:582px;width:26px;height:1px;background:#ababab"></div>
<div class="a" style="left:-66.5px;width:300px;text-align:center;top:586.57px;font-size:13.5px;color:#262626;">11</div>
<div class="a" style="left:71px;top:602px;width:26px;height:1px;background:#ababab"></div>
<div class="a" style="left:-66.5px;width:300px;text-align:center;top:606.57px;font-size:13.5px;color:#262626;">12</div>
<div class="a" style="left:71px;top:622px;width:26px;height:1px;background:#ababab"></div>
<div class="a" style="left:-66.5px;width:300px;text-align:center;top:626.57px;font-size:13.5px;color:#262626;">13</div>
<div class="a" style="left:71px;top:642px;width:26px;height:1px;background:#ababab"></div>
<div class="a" style="left:-66.5px;width:300px;text-align:center;top:646.57px;font-size:13.5px;color:#262626;">14</div>
<div class="a" style="left:71px;top:662px;width:26px;height:1px;background:#ababab"></div>
<div class="a" style="left:-66.5px;width:300px;text-align:center;top:666.57px;font-size:13.5px;color:#262626;">15</div>
<div class="a" style="left:71px;top:682px;width:26px;height:1px;background:#ababab"></div>
<div class="a" style="left:-66.5px;width:300px;text-align:center;top:686.57px;font-size:13.5px;color:#262626;">16</div>
<div class="a" style="left:71px;top:702px;width:26px;height:1px;background:#ababab"></div>
<div class="a" style="left:-66.5px;width:300px;text-align:center;top:706.57px;font-size:13.5px;color:#262626;">17</div>
<div class="a" style="left:71px;top:722px;width:26px;height:1px;background:#ababab"></div>
<div class="a" style="left:-66.5px;width:300px;text-align:center;top:726.57px;font-size:13.5px;color:#262626;">18</div>
<div class="a" style="left:71px;top:742px;width:26px;height:1px;background:#ababab"></div>
<div class="a" style="left:-66.5px;width:300px;text-align:center;top:746.57px;font-size:13.5px;color:#262626;">19</div>
<div class="a" style="left:96px;top:382px;width:1px;height:379px;background:#ababab"></div>
<div class="a" style="left:473px;top:382px;width:352px;height:1px;background:#d9d9d9"></div>
<div class="a" style="left:473px;top:402px;width:352px;height:1px;background:#d9d9d9"></div>
<div class="a" style="left:473px;top:422px;width:352px;height:1px;background:#d9d9d9"></div>
<div class="a" style="left:473px;top:442px;width:352px;height:1px;background:#d9d9d9"></div>
<div class="a" style="left:473px;top:462px;width:352px;height:1px;background:#d9d9d9"></div>
<div class="a" style="left:473px;top:482px;width:352px;height:1px;background:#d9d9d9"></div>
<div class="a" style="left:473px;top:502px;width:352px;height:1px;background:#d9d9d9"></div>
<div class="a" style="left:473px;top:522px;width:352px;height:1px;background:#d9d9d9"></div>
<div class="a" style="left:473px;top:542px;width:352px;height:1px;background:#d9d9d9"></div>
<div class="a" style="left:473px;top:562px;width:352px;height:1px;background:#d9d9d9"></div>
<div class="a" style="left:473px;top:582px;width:352px;height:1px;background:#d9d9d9"></div>
<div class="a" style="left:473px;top:602px;width:352px;height:1px;background:#d9d9d9"></div>
<div class="a" style="left:473px;top:622px;width:352px;height:1px;background:#d9d9d9"></div>
<div class="a" style="left:473px;top:642px;width:352px;height:1px;background:#d9d9d9"></div>
<div class="a" style="left:473px;top:662px;width:352px;height:1px;background:#d9d9d9"></div>
<div class="a" style="left:473px;top:682px;width:352px;height:1px;background:#d9d9d9"></div>
<div class="a" style="left:473px;top:702px;width:352px;height:1px;background:#d9d9d9"></div>
<div class="a" style="left:473px;top:722px;width:352px;height:1px;background:#d9d9d9"></div>
<div class="a" style="left:473px;top:742px;width:352px;height:1px;background:#d9d9d9"></div>
<div class="a" style="left:473px;top:762px;width:352px;height:1px;background:#d9d9d9"></div>
<div class="a" style="left:542px;top:382px;width:1px;height:379px;background:#d9d9d9"></div>
<div class="a" style="left:659px;top:382px;width:1px;height:379px;background:#d9d9d9"></div>
<div class="a" style="left:728px;top:382px;width:1px;height:379px;background:#d9d9d9"></div>
<div class="a" style="left:824px;top:382px;width:1px;height:379px;background:#d9d9d9"></div>
<div class="a" style="left:185px;top:382px;width:289px;height:1px;background:#000"></div>
<div class="a" style="left:185px;top:402px;width:289px;height:1px;background:#000"></div>
<div class="a" style="left:185px;top:422px;width:289px;height:1px;background:#000"></div>
<div class="a" style="left:185px;top:442px;width:289px;height:1px;background:#000"></div>
<div class="a" style="left:185px;top:462px;width:289px;height:1px;background:#000"></div>
<div class="a" style="left:185px;top:482px;width:289px;height:1px;background:#000"></div>
<div class="a" style="left:185px;top:502px;width:289px;height:1px;background:#000"></div>
<div class="a" style="left:185px;top:522px;width:289px;height:1px;background:#000"></div>
<div class="a" style="left:185px;top:542px;width:289px;height:1px;background:#000"></div>
<div class="a" style="left:185px;top:562px;width:289px;height:1px;background:#000"></div>
<div class="a" style="left:185px;top:582px;width:289px;height:1px;background:#000"></div>
<div class="a" style="left:185px;top:602px;width:289px;height:1px;background:#000"></div>
<div class="a" style="left:185px;top:622px;width:289px;height:1px;background:#000"></div>
<div class="a" style="left:185px;top:642px;width:289px;height:1px;background:#000"></div>
<div class="a" style="left:185px;top:662px;width:289px;height:1px;background:#000"></div>
<div class="a" style="left:185px;top:682px;width:289px;height:1px;background:#000"></div>
<div class="a" style="left:185px;top:702px;width:289px;height:1px;background:#000"></div>
<div class="a" style="left:185px;top:722px;width:289px;height:1px;background:#000"></div>
<div class="a" style="left:185px;top:742px;width:289px;height:1px;background:#000"></div>
<div class="a" style="left:185px;top:762px;width:289px;height:1px;background:#000"></div>
<div class="a" style="left:185px;top:382px;width:1px;height:379px;background:#000"></div>
<div class="a" style="left:287px;top:382px;width:1px;height:379px;background:#000"></div>
<div class="a" style="left:386px;top:382px;width:1px;height:379px;background:#000"></div>
<div class="a" style="left:473px;top:382px;width:1px;height:379px;background:#000"></div>
<div class="a" style="left:188.5px;top:386.57px;font-size:13.5px;color:#000;">Месяц</div>
<div class="a" style="left:289.8px;top:386.57px;font-size:13.5px;color:#000;">Продано</div>
<div class="a" style="left:389.4px;top:386.57px;font-size:13.5px;color:#000;">Прибыль</div>
<div class="a" style="left:356.5px;width:300px;text-align:right;top:386.57px;font-size:13.5px;color:#000;">543534</div>
<div class="a" style="left:188.5px;top:406.57px;font-size:13.5px;color:#000;">Январь</div>
<div class="a" style="left:83.80000000000001px;width:300px;text-align:right;top:406.57px;font-size:13.5px;color:#000;">14</div>
<div class="a" style="left:171px;width:300px;text-align:right;top:406.57px;font-size:13.5px;color:#000;">54234</div>
<div class="a" style="left:188.5px;top:426.57px;font-size:13.5px;color:#000;">Февраль</div>
<div class="a" style="left:83.80000000000001px;width:300px;text-align:right;top:426.57px;font-size:13.5px;color:#000;">17</div>
<div class="a" style="left:171px;width:300px;text-align:right;top:426.57px;font-size:13.5px;color:#000;">76345</div>
<div class="a" style="left:188.5px;top:446.57px;font-size:13.5px;color:#000;">Март</div>
<div class="a" style="left:83.80000000000001px;width:300px;text-align:right;top:446.57px;font-size:13.5px;color:#000;">26</div>
<div class="a" style="left:171px;width:300px;text-align:right;top:446.57px;font-size:13.5px;color:#000;">45234</div>
<div class="a" style="left:188.5px;top:466.57px;font-size:13.5px;color:#000;">Апрель</div>
<div class="a" style="left:83.80000000000001px;width:300px;text-align:right;top:466.57px;font-size:13.5px;color:#000;">78</div>
<div class="a" style="left:171px;width:300px;text-align:right;top:466.57px;font-size:13.5px;color:#000;">178000</div>
<div class="a" style="left:188.5px;top:486.57px;font-size:13.5px;color:#000;">Май</div>
<div class="a" style="left:83.80000000000001px;width:300px;text-align:right;top:486.57px;font-size:13.5px;color:#000;">3</div>
<div class="a" style="left:171px;width:300px;text-align:right;top:486.57px;font-size:13.5px;color:#000;">4523</div>
<div class="a" style="left:188.5px;top:506.57px;font-size:13.5px;color:#000;">Июнь</div>
<div class="a" style="left:83.80000000000001px;width:300px;text-align:right;top:506.57px;font-size:13.5px;color:#000;">15</div>
<div class="a" style="left:171px;width:300px;text-align:right;top:506.57px;font-size:13.5px;color:#000;">53452</div>
<div class="a" style="left:188.5px;top:526.57px;font-size:13.5px;color:#000;">Июль</div>
<div class="a" style="left:83.80000000000001px;width:300px;text-align:right;top:526.57px;font-size:13.5px;color:#000;">43</div>
<div class="a" style="left:171px;width:300px;text-align:right;top:526.57px;font-size:13.5px;color:#000;">78000</div>
<div class="a" style="left:188.5px;top:546.57px;font-size:13.5px;color:#000;">Август</div>
<div class="a" style="left:83.80000000000001px;width:300px;text-align:right;top:546.57px;font-size:13.5px;color:#000;">27</div>
<div class="a" style="left:171px;width:300px;text-align:right;top:546.57px;font-size:13.5px;color:#000;">45234</div>
<div class="a" style="left:188.5px;top:566.57px;font-size:13.5px;color:#000;">Сентябрь</div>
<div class="a" style="left:83.80000000000001px;width:300px;text-align:right;top:566.57px;font-size:13.5px;color:#000;">28</div>
<div class="a" style="left:171px;width:300px;text-align:right;top:566.57px;font-size:13.5px;color:#000;">97643</div>
<div class="a" style="left:188.5px;top:586.57px;font-size:13.5px;color:#000;">Октябрь</div>
<div class="a" style="left:83.80000000000001px;width:300px;text-align:right;top:586.57px;font-size:13.5px;color:#000;">31</div>
<div class="a" style="left:171px;width:300px;text-align:right;top:586.57px;font-size:13.5px;color:#000;">4524</div>
<div class="a" style="left:188.5px;top:606.57px;font-size:13.5px;color:#000;">Ноябрь</div>
<div class="a" style="left:83.80000000000001px;width:300px;text-align:right;top:606.57px;font-size:13.5px;color:#000;">78</div>
<div class="a" style="left:171px;width:300px;text-align:right;top:606.57px;font-size:13.5px;color:#000;">245908</div>
<div class="a" style="left:188.5px;top:626.57px;font-size:13.5px;color:#000;">Декабрь</div>
<div class="a" style="left:83.80000000000001px;width:300px;text-align:right;top:626.57px;font-size:13.5px;color:#000;">134</div>
<div class="a" style="left:171px;width:300px;text-align:right;top:626.57px;font-size:13.5px;color:#000;">234524</div>
<div class="a" style="left:188.5px;top:646.57px;font-size:13.5px;color:#000;">Январь</div>
<div class="a" style="left:83.80000000000001px;width:300px;text-align:right;top:646.57px;font-size:13.5px;color:#000;">53</div>
<div class="a" style="left:171px;width:300px;text-align:right;top:646.57px;font-size:13.5px;color:#000;">34534</div>
<div class="a" style="left:188.5px;top:666.57px;font-size:13.5px;color:#000;">Февраль</div>
<div class="a" style="left:83.80000000000001px;width:300px;text-align:right;top:666.57px;font-size:13.5px;color:#000;">54</div>
<div class="a" style="left:171px;width:300px;text-align:right;top:666.57px;font-size:13.5px;color:#000;">76345</div>
<div class="a" style="left:188.5px;top:686.57px;font-size:13.5px;color:#000;">Март</div>
<div class="a" style="left:83.80000000000001px;width:300px;text-align:right;top:686.57px;font-size:13.5px;color:#000;">345</div>
<div class="a" style="left:171px;width:300px;text-align:right;top:686.57px;font-size:13.5px;color:#000;">2653</div>
<div class="a" style="left:188.5px;top:706.57px;font-size:13.5px;color:#000;">Апрель</div>
<div class="a" style="left:83.80000000000001px;width:300px;text-align:right;top:706.57px;font-size:13.5px;color:#000;">34</div>
<div class="a" style="left:171px;width:300px;text-align:right;top:706.57px;font-size:13.5px;color:#000;">178000</div>
<div class="a" style="left:188.5px;top:726.57px;font-size:13.5px;color:#000;">Май</div>
<div class="a" style="left:83.80000000000001px;width:300px;text-align:right;top:726.57px;font-size:13.5px;color:#000;">43</div>
<div class="a" style="left:171px;width:300px;text-align:right;top:726.57px;font-size:13.5px;color:#000;">435</div>
<div class="a" style="left:188.5px;top:746.57px;font-size:13.5px;color:#000;">Июнь</div>
<div class="a" style="left:83.80000000000001px;width:300px;text-align:right;top:746.57px;font-size:13.5px;color:#000;">22</div>
<div class="a" style="left:171px;width:300px;text-align:right;top:746.57px;font-size:13.5px;color:#000;">4234</div>
<div class="a" style="left:117px;top:761px;width:773px;height:1px;background:#a0a0a0"></div>
<div class="a" style="left:893px;top:236px;width:15px;height:526px;background:#fff;border-left:1px solid #c6c6c6;border-top:1px solid #c6c6c6"></div>
<div class="a" style="left:894px;top:250px;width:14px;height:2px;background:#c6c6c6"></div>
<svg style="left:897px;top:241px" width="7" height="4" viewBox="0 0 7 4"><path d="M0 4h7L3.5 0z" fill="#777"/></svg>
<div class="a" style="left:894px;top:706px;width:14px;height:41px;background:#dcdcdc"></div>
<div class="a" style="left:893px;top:747px;width:15px;height:15px;background:#fff;border:1px solid #c6c6c6"></div>
<svg style="left:897px;top:752px" width="7" height="4" viewBox="0 0 7 4"><path d="M0 0h7L3.5 4z" fill="#777"/></svg>
<div class="a" style="left:32px;top:762px;width:876px;height:27px;background:#e6e6e6"></div>
<div class="a" style="left:32px;top:761px;width:857px;height:1px;background:#a3a3a3"></div>
<svg style="left:58px;top:771px" width="5" height="8" viewBox="0 0 5 8"><path d="M5 0v8L0 4z" fill="#c3c3c3"/></svg>
<svg style="left:87px;top:771px" width="5" height="8" viewBox="0 0 5 8"><path d="M0 0v8l5-4z" fill="#c3c3c3"/></svg>
<div class="a" style="left:132px;top:761px;width:60px;height:25px;background:#fff;border-left:1px solid #b0b0b0;border-right:1px solid #b0b0b0"></div>
<div class="a" style="left:132px;top:783.5px;width:60px;height:2.5px;background:#217346"></div>
<div class="a" style="left:144px;top:767.8px;font-size:13px;color:#217346;transform:scaleX(0.9350);transform-origin:0 0;font-weight:bold">Лист1</div>
<svg style="left:225px;top:767px" width="16" height="16" viewBox="0 0 16 16"><circle cx="8" cy="8" r="7.2" fill="none" stroke="#7a7a7a" stroke-width="1.1"/><path d="M8 4v8 M4 8h8" stroke="#7a7a7a" stroke-width="1.3"/></svg>
<div class="a" style="left:559px;top:770px;width:2px;height:2px;background:#a0a0a0"></div>
<div class="a" style="left:559px;top:774px;width:2px;height:2px;background:#a0a0a0"></div>
<div class="a" style="left:559px;top:778px;width:2px;height:2px;background:#a0a0a0"></div>
<div class="a" style="left:576px;top:768px;width:314px;height:15px;background:#dadada;border:1px solid #bdbdbd"></div>
<div class="a" style="left:577px;top:769px;width:14px;height:13px;background:#fff;border-right:2px solid #bdbdbd"></div>
<svg style="left:581px;top:772px" width="4" height="7" viewBox="0 0 4 7"><path d="M4 0v7L0 3.5z" fill="#555"/></svg>
<div class="a" style="left:591px;top:769px;width:248px;height:13px;background:#fff;border-right:1px solid #c6c6c6"></div>
<div class="a" style="left:875px;top:769px;width:14px;height:13px;background:#fff;border-left:1px solid #bdbdbd"></div>
<svg style="left:880px;top:772px" width="4" height="7" viewBox="0 0 4 7"><path d="M0 0v7l4-3.5z" fill="#555"/></svg>
<div class="a" style="left:32px;top:789px;width:876px;height:22px;background:#f3f3f3;border-top:1px solid #c8c8c8"></div>
<div class="a" style="left:32px;top:811px;width:876px;height:1px;background:#217346"></div>
<div class="a" style="left:40.5px;top:794.57px;font-size:11.5px;color:#444;">Готово</div>
<div class="a" style="left:95.5px;top:794.57px;font-size:11.5px;color:#444;transform:scaleX(0.9834);transform-origin:0 0;">Страница: 1 из 1</div>
<svg style="left:610px;top:793px" width="13" height="13" viewBox="0 0 13 13"><path d="M0.5 0.5h12v12h-12z M0.5 4.5h12 M0.5 8.5h12 M4.5 0.5v12 M8.5 0.5v12" fill="none" stroke="#666"/></svg>
<svg style="left:650px;top:793px" width="14" height="13" viewBox="0 0 14 13"><path d="M0.5 0.5h13v12h-13z M3.5 2.5h7v8h-7z M5 4.5h4 M5 6.5h4 M5 8.5h4" fill="none" stroke="#666"/></svg>
<svg style="left:690px;top:793px" width="14" height="13" viewBox="0 0 14 13"><path d="M0.5 0.5h13v12h-13z M3.5 0.5v5.5h6V0.5 M6.5 0.5v5.5" fill="none" stroke="#666"/></svg>
<div class="a" style="left:722.5px;top:799.5px;width:8px;height:1px;background:#888"></div>
<div class="a" style="left:735.5px;top:799.5px;width:100px;height:1px;background:#b0b0b0"></div>
<div class="a" style="left:786px;top:796.5px;width:1px;height:6px;background:#888"></div>
<div class="a" style="left:840px;top:799.5px;width:9px;height:1px;background:#888"></div>
<div class="a" style="left:844px;top:795.5px;width:1px;height:9px;background:#888"></div>
<div class="a" style="left:862.3px;top:794.57px;font-size:11.5px;color:#8a8a8a;transform:scaleX(0.9152);transform-origin:0 0;">100 %</div>
</body></html>
